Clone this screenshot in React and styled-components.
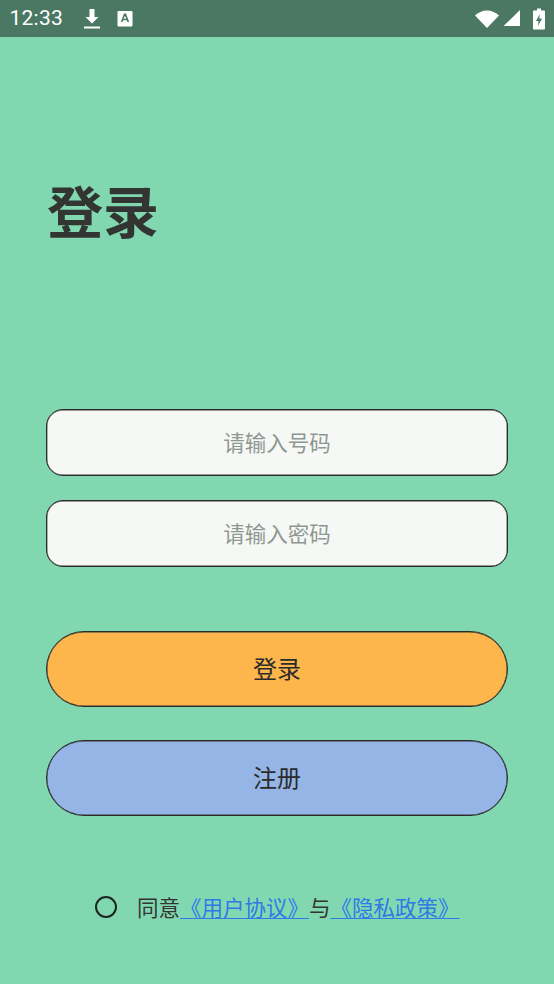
import React from "react";
import styled, { createGlobalStyle } from "styled-components";

const cjk = `"Noto Sans CJK SC", "Noto Sans", sans-serif`;

const Global = createGlobalStyle`
  html, body { margin: 0; padding: 0; background: #81d8b0; }
  * { box-sizing: border-box; }
`;

const Page = styled.div`
  width: 554px;
  height: 984px;
  background: #81d8b0;
  display: flex;
  flex-direction: column;
  font-family: ${cjk};
  overflow: hidden;
`;

const StatusBar = styled.div`
  height: 37px;
  background: #4a7863;
  display: flex;
  align-items: center;
  padding: 0 9px 0 9.5px;
  color: #fff;
  flex: none;
`;

const Time = styled.span`
  font-family: Roboto, sans-serif;
  font-size: 21px;
  line-height: 37px;
  letter-spacing: 0.25px;
  width: 73.5px;
`;

const Spacer = styled.div`
  flex: 1;
`;

const StatusIcon = styled.svg`
  display: block;
  flex: none;
  margin-left: ${(p) => p.$ml || 0}px;
`;

const Title = styled.h1`
  margin: 139px 0 0 47px;
  height: 66px;
  font-size: 56px;
  line-height: 66px;
  font-weight: 700;
  color: #333533;
`;

const Form = styled.div`
  margin: 167px 46px 0;
  display: flex;
  flex-direction: column;
`;

const Field = styled.div`
  height: 67px;
  border: 1px solid #2a2a2a;
  box-shadow: inset 0 0 0.5px 0.4px #3a3a3a;
  border-radius: 17px;
  background: #f6f8f5;
  color: #8e9893;
  font-size: 21.5px;
  padding-bottom: 3px;
  display: flex;
  align-items: center;
  justify-content: center;
  margin-bottom: 24px;
`;

const Button = styled.div`
  height: 76px;
  border: 1px solid #2a2a2a;
  box-shadow: inset 0 0 0.5px 0.4px #3a3a3a;
  border-radius: 39px;
  background: ${(p) => p.$bg};
  color: #2b2b2b;
  font-size: 24px;
  padding-bottom: 3px;
  display: flex;
  align-items: center;
  justify-content: center;
  margin-top: ${(p) => p.$mt}px;
`;

const Agreement = styled.div`
  margin: 76px 0 0 95px;
  display: flex;
  align-items: center;
  font-size: 21.5px;
  line-height: 30px;
  color: #333533;
  white-space: pre;
`;

const Radio = styled.span`
  width: 22px;
  height: 22px;
  border: 2.2px solid #1c2422;
  border-radius: 50%;
  margin-right: 20px;
  flex: none;
`;

const Link = styled.span`
  color: #2f79e8;
  text-decoration: underline;
  text-underline-offset: 2px;
  text-decoration-thickness: 1px;
`;

export default function App() {
  return (
    <Page>
      <Global />
      <StatusBar>
        <Time>12:33</Time>
        <StatusIcon width="18" height="22" viewBox="0 0 18 22">
          <path d="M6.500 1h5v8h4L9 15.500 2.500 9h4z" fill="#fff" />
          <rect x="1" y="18.500" width="16" height="2" fill="#fff" />
        </StatusIcon>
        <StatusIcon $ml={16} width="16" height="17" viewBox="0 0 16 17">
          <path fillRule="evenodd" d="M1.500 1h13a1 1 0 0 1 1 1v13.500a1 1 0 0 1-1 1h-13a1 1 0 0 1-1-1V2a1 1 0 0 1 1-1zM7 3.500 3.800 12h1.700l.6-1.800h3.700l.6 1.800h1.800L9 3.500zM8 5.800l1.300 3H6.600z" fill="#fff" />
        </StatusIcon>
        <Spacer />
        <StatusIcon width="24" height="18" viewBox="0 0 24 18">
          <path d="M0 5.500C3 2.500 7.500 0.500 12 0.500s9 2 12 5L12 18z" fill="#fff" />
        </StatusIcon>
        <StatusIcon $ml={4} width="18" height="18" viewBox="0 0 18 18">
          <path d="M17 0V16H0.500z" fill="#fff" />
        </StatusIcon>
        <StatusIcon $ml={12} width="12" height="22" viewBox="0 0 12 22">
          <path fillRule="evenodd" d="M4 0.500h4v2h3a1 1 0 0 1 1 1V20.500a1 1 0 0 1-1 1H1a1 1 0 0 1-1-1V3.500a1 1 0 0 1 1-1h3zM6.800 6 3 13h2.500l-.5 5 4-7.500H6.300z" fill="#fff" />
        </StatusIcon>
      </StatusBar>
      <Title>登录</Title>
      <Form>
        <Field>请输入号码</Field>
        <Field>请输入密码</Field>
        <Button $bg="#fdb64c" $mt={40}>登录</Button>
        <Button $bg="#94b5e6" $mt={33}>注册</Button>
      </Form>
      <Agreement>
        <Radio />
        同意<Link>《用户协议》</Link>与<Link>《隐私政策》</Link>
      </Agreement>
    </Page>
  );
}
